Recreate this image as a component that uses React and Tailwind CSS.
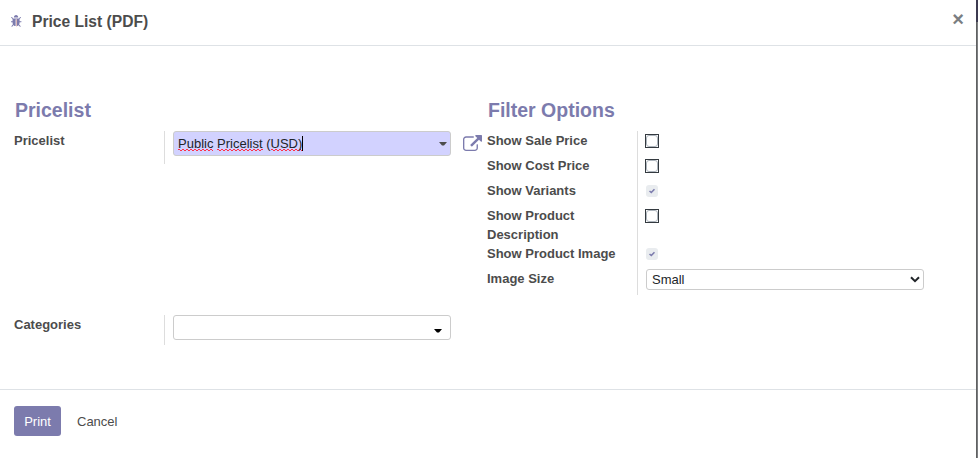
const BugIcon = () => (
  <svg className="h-3 w-[11px]" viewBox="96 60 1600 1600" preserveAspectRatio="none" fill="#7c7bad">
    <path d="M1632 960q0 26-19 45t-45 19h-224q0 171-67 290l208 209q19 19 19 45t-19 45q-18 19-45 19t-45-19l-198-197q-5 5-15 13t-42 28.5-65 36.5-82 29-97 13v-896h-128v896q-51 0-101.5-13.5t-87-33-66-39-43.500-32.500l-15-14-183 207q-20 21-48 21-24 0-43-16-19-18-20.500-44.500t15.500-46.500l202-227q-58-114-58-274h-224q-26 0-45-19t-19-45 19-45 45-19h224v-294l-173-173q-19-19-19-45t19-45 45-19 45 19l173 173h844l173-173q19-19 45-19t45 19 19 45-19 45l-173 173v294h224q26 0 45 19t19 45zm-480-576h-640q0-133 93.500-226.500t226.500-93.500 226.500 93.500 93.500 226.500z" />
    <path d="M832 640h128v960h-128z" fill="#e3b9b4" />
  </svg>
);

const ExternalLinkIcon = () => (
  <svg className="ml-3 mt-1 h-4 w-[19px] shrink-0" viewBox="0 0 1792 1536" preserveAspectRatio="none" fill="#7c7bad">
    <path d="M1408 928v320q0 119-84.500 203.500t-203.500 84.500h-832q-119 0-203.500-84.500t-84.500-203.500v-832q0-119 84.500-203.500t203.500-84.500h704q14 0 23 9t9 23v64q0 14-9 23t-23 9h-704q-66 0-113 47t-47 113v832q0 66 47 113t113 47h832q66 0 113-47t47-113v-320q0-14 9-23t23-9h64q14 0 23 9t9 23zm384-864v512q0 26-19 45t-45 19-45-19l-176-176-652 652q-10 10-23 10t-23-10l-114-114q-10-10-10-23t10-23l652-652-176-176q-19-19-19-45t19-45 45-19h512q26 0 45 19t19 45z" />
  </svg>
);

const Caret = ({ className }) => (
  <svg className={className} viewBox="0 0 8 4">
    <path d="M0 0h8L5 3.500H3z" fill="currentColor" />
  </svg>
);

// Two offset rows of dashes form the spell-check squiggle.
const Misspelled = ({ children }) => (
  <span className="bg-[linear-gradient(90deg,#ff3048_50%,transparent_50%),linear-gradient(90deg,transparent_50%,#ff3048_50%)] bg-[length:4px_1px,4px_1px] bg-[position:0_calc(100%_-_1px),0_100%] bg-repeat-x">
    {children}
  </span>
);

const Check = ({ checked }) =>
  checked ? (
    <span className="ml-px mt-px flex h-3 w-3 items-center justify-center rounded-[3px] bg-[#e9ecef]">
      <svg className="h-1.5 w-1.5" viewBox="0 0 6 6" fill="none" stroke="#7c7bad" strokeWidth="1.600">
        <path d="M.5 3L2.300 4.500L5.500 1.200" />
      </svg>
    </span>
  ) : (
    <span className="block h-3.5 w-3.5 border border-[#343a40] bg-white">
      <span className="block h-3 w-3 rounded-[3px] border border-[#adb5bd]" />
    </span>
  );

const options = [
  { label: "Show Sale Price", labelHeight: "h-[25px]", height: "h-[25px]", checked: false },
  { label: "Show Cost Price", labelHeight: "h-[25px]", height: "h-[25px]", checked: false },
  { label: "Show Variants", labelHeight: "h-[25px]", height: "h-6", checked: true },
  { label: "Show Product Description", labelHeight: "h-[38px]", height: "h-[38px]", checked: false },
  { label: "Show Product Image", labelHeight: "h-[25px]", height: "h-6", checked: true },
];

export default function App() {
  return (
    <div className="flex h-[458px] w-[978px] overflow-hidden bg-white font-['Liberation_Sans',Arial,sans-serif] text-[13px] leading-[19px] text-[#4c4c4c]">
      <div className="flex w-[976px] flex-col">
        <header className="flex h-[46px] shrink-0 items-start border-b border-[#dee2e6] pl-[11px]">
          <span className="mt-[15px]">
            <BugIcon />
          </span>
          <h1 className="ml-2.5 mt-2.5 text-[15.6px] font-bold leading-6">Price List (PDF)</h1>
          <button className="ml-auto mr-3 mt-[7px] text-[20px] font-bold leading-6 text-[#7a7e82]">×</button>
        </header>

        <main className="flex h-[343px] shrink-0 pl-3.5 pt-[50px]">
          <section className="w-[473px]">
            <h2 className="ml-px h-[35px] text-[19.5px] font-bold leading-[29px] text-[#7c7bad]">Pricelist</h2>
            <div className="flex h-[184px] items-start">
              <label className="w-[150px] font-bold">Pricelist</label>
              <div className="h-[33px] w-px bg-[#dddddd]" />
              <div className="ml-2 flex h-[25px] w-[278px] items-center rounded-[3px] border border-[#cccccc] bg-[#d2d2ff] pl-1 pr-[3px] text-[#212529]">
                <span className="whitespace-nowrap">
                  <Misspelled>Public</Misspelled> <Misspelled>Pricelist</Misspelled> (<Misspelled>USD)</Misspelled>
                </span>
                <span className="h-[15px] w-px bg-black" />
                <Caret className="ml-auto h-1 w-2 text-[#4c4c4c]" />
              </div>
              <ExternalLinkIcon />
            </div>
            <div className="flex items-start">
              <label className="w-[150px] font-bold">Categories</label>
              <div className="h-[30px] w-px bg-[#dddddd]" />
              <div className="ml-2 flex h-[25px] w-[278px] items-center justify-end rounded-[3px] border border-[#cccccc] pr-2">
                <Caret className="mt-1.5 h-1 w-2 text-black" />
              </div>
            </div>
          </section>

          <section className="w-[440px]">
            <h2 className="ml-px h-[35px] text-[19.5px] font-bold leading-[29px] text-[#7c7bad]">Filter Options</h2>
            <div className="flex">
              <div className="w-[150px] font-bold">
                {options.map((o) => (
                  <div key={o.label} className={`${o.labelHeight} pr-4`}>{o.label}</div>
                ))}
                <div>Image Size</div>
              </div>
              <div className="h-[164px] w-px bg-[#dddddd]" />
              <div className="ml-[7px] pt-[3px]">
                {options.map((o) => (
                  <div key={o.label} className={o.height}>
                    <Check checked={o.checked} />
                  </div>
                ))}
                <div className="-mt-[3px] ml-px flex h-[21px] w-[278px] items-center justify-between rounded-[3px] border border-[#cccccc] pl-[5px] pr-[3px] text-[#212529]">
                  <span>Small</span>
                  <svg className="h-[7px] w-2.5" viewBox="0 0 10 7" fill="none" stroke="#212529" strokeWidth="2">
                    <path d="M1 1.200L5 5.200L9 1.200" />
                  </svg>
                </div>
              </div>
            </div>
          </section>
        </main>

        <footer className="flex grow items-start border-t border-[#dee2e6] pl-3.5 pt-4">
          <button className="h-[30px] w-[47px] rounded-[3px] bg-[#7c7bad] pt-px text-white">Print</button>
          <button className="ml-4 h-[30px] pt-px">Cancel</button>
        </footer>
      </div>
      <div className="flex w-0.5 flex-col">
        <div className="h-[22px] bg-[#3c3a50]" />
        <div className="grow border-l border-[#606162] bg-[#7c7e80]" />
      </div>
    </div>
  );
}
